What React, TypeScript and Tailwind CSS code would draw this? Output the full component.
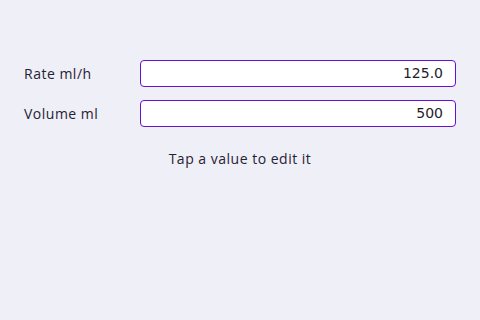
import React from "react";

const Field = ({ label, value }: { label: string; value: string }) => (
  <div className="flex items-center h-[27px]">
    <div className="w-[116px] text-[14px] tracking-[0.5px] text-[#262233]">{label}</div>
    <div className="flex-1 h-full bg-white border-[1.5px] border-[#6a0dd6] rounded-[4px] flex items-center justify-end pr-[12px] text-[14px] text-[#1f1d2b] font-['DejaVu_Sans',sans-serif]">
      {value}
    </div>
  </div>
);

export default function App() {
  return (
    <div className="w-[480px] h-[320px] bg-[#efeff8] font-['Open_Sans',sans-serif] pt-[60px] pl-[24px] pr-[24px]">
      <div className="flex flex-col gap-[13px]">
        <Field label="Rate ml/h" value="125.0" />
        <Field label="Volume ml" value="500" />
      </div>
      <div className="text-center text-[14px] tracking-[0.5px] text-[#262233] mt-[21px]">
        Tap a value to edit it
      </div>
    </div>
  );
}
